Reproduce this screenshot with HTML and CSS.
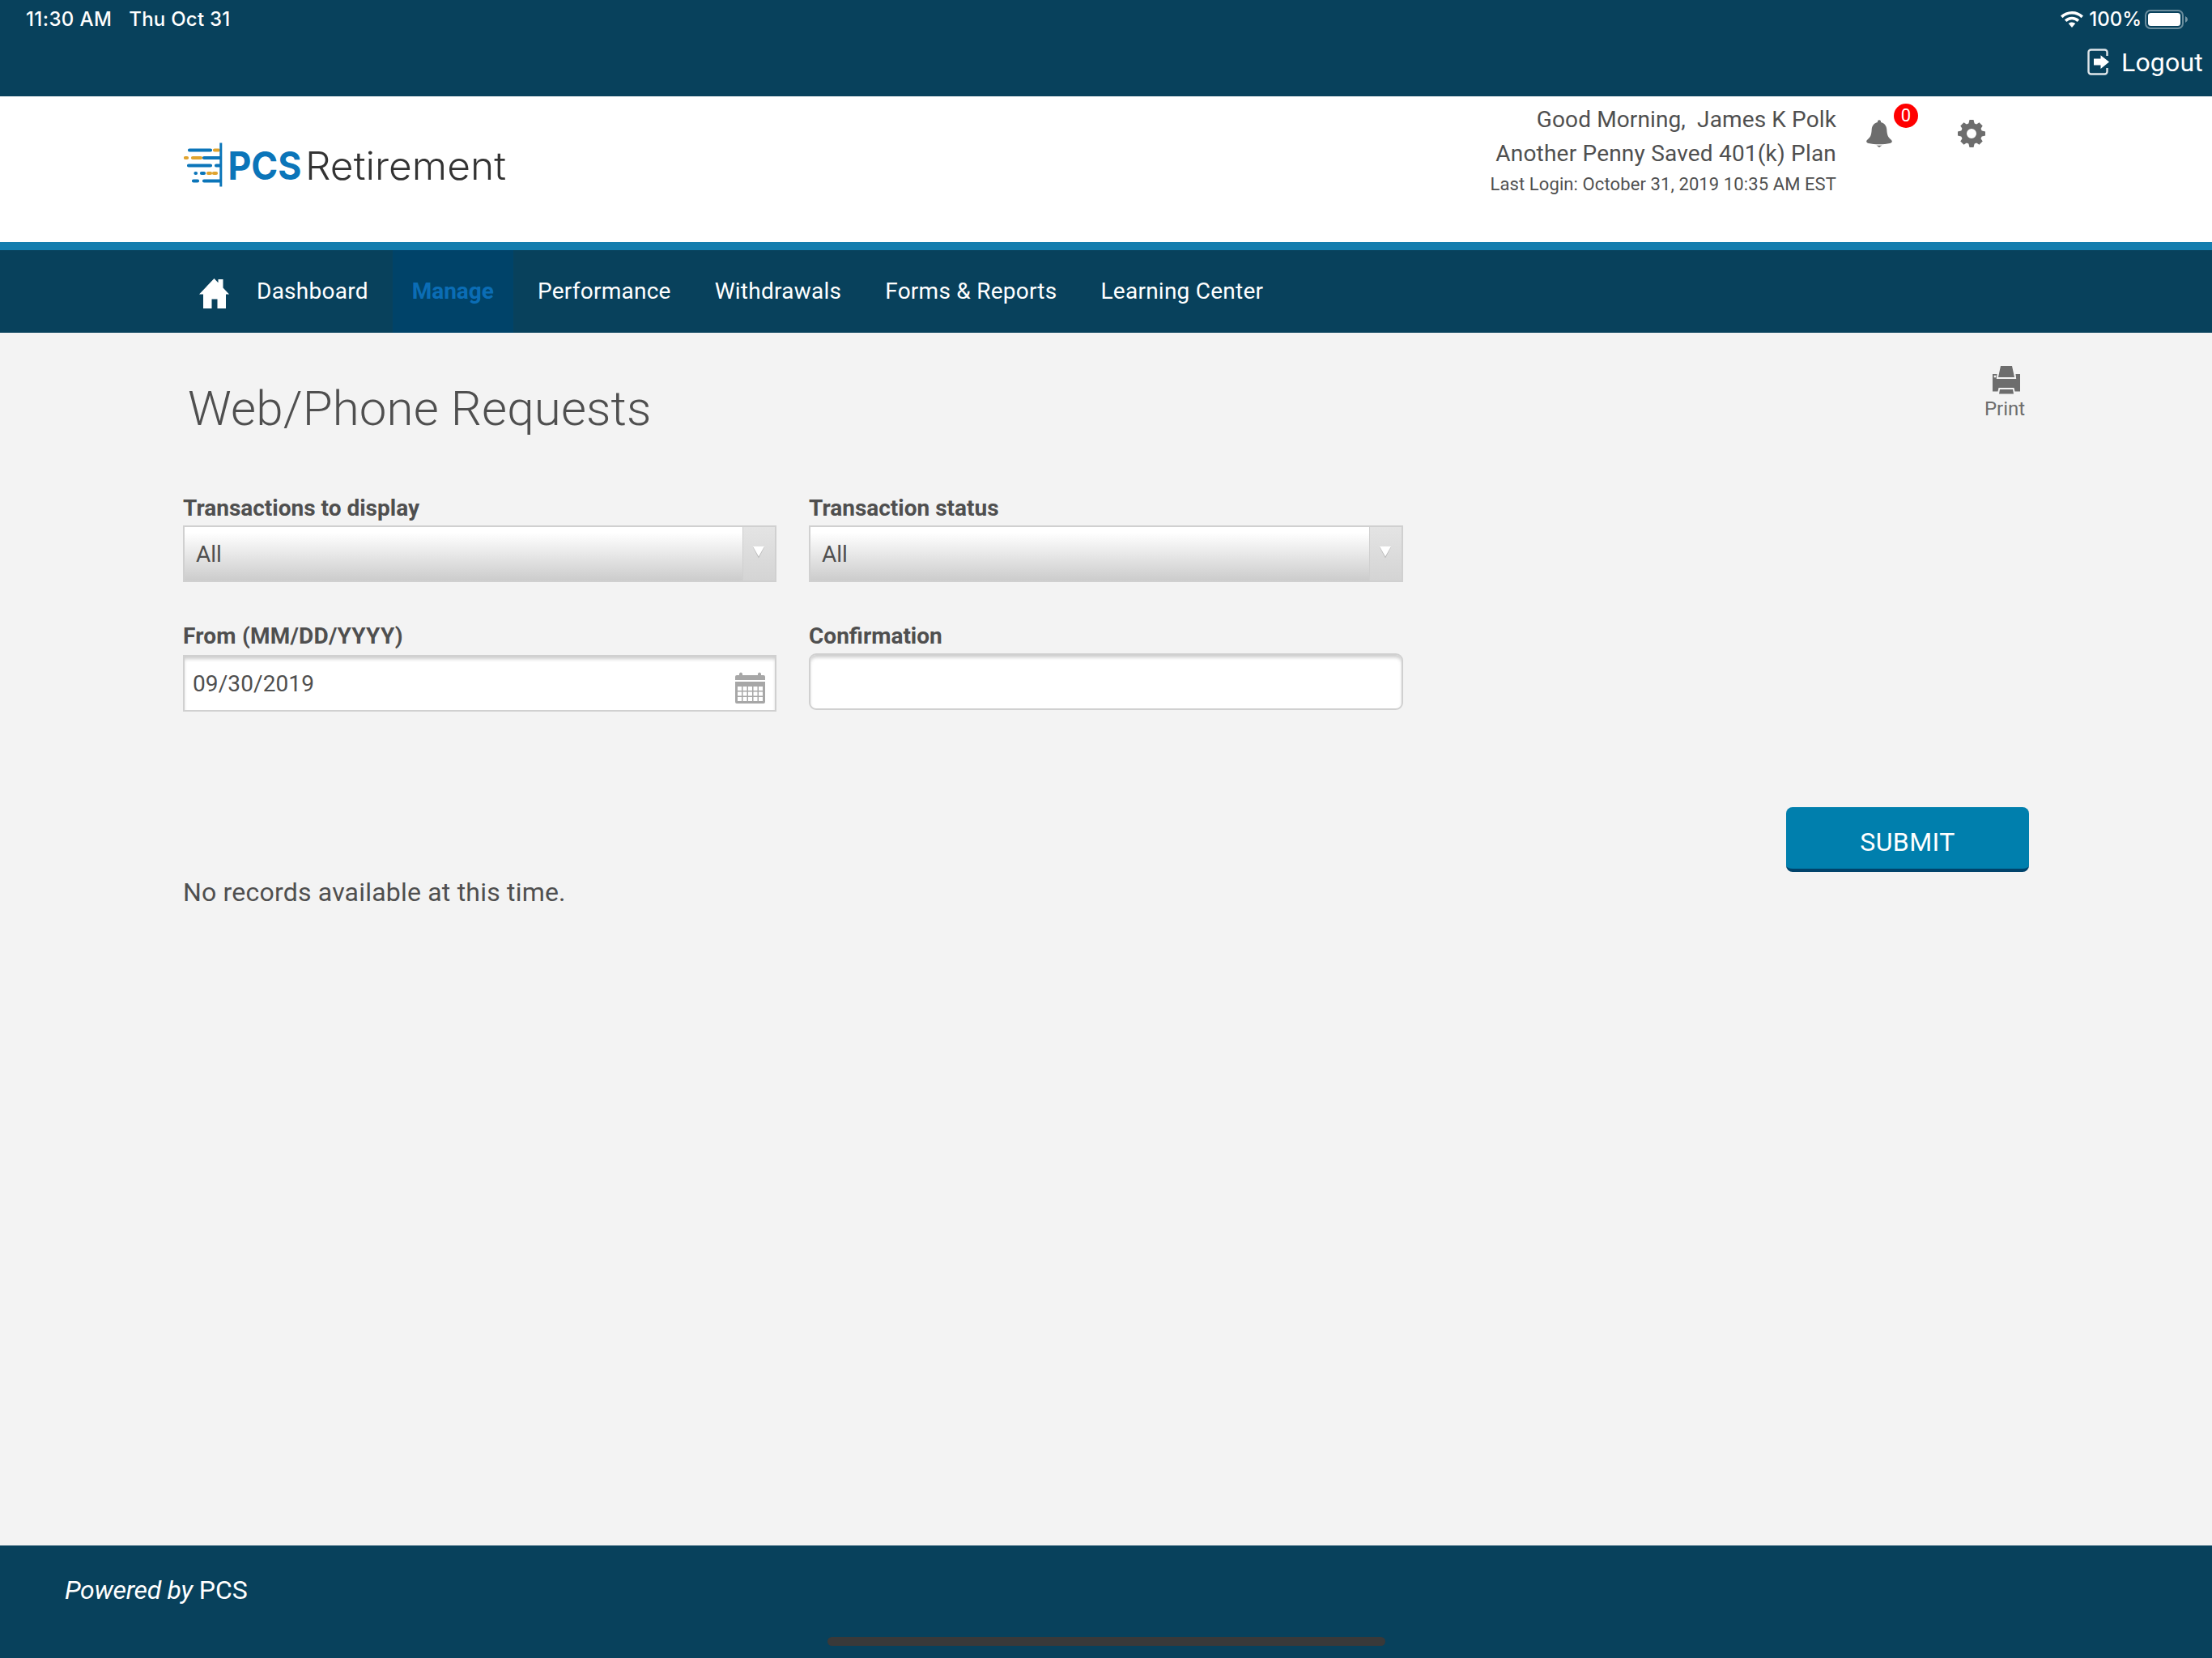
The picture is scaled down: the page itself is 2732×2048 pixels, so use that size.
FILE: index.html
```html
<!DOCTYPE html>
<html lang="en">
<head>
<meta charset="utf-8">
<title>Web/Phone Requests</title>
<link rel="stylesheet" href="styles.css">
</head>
<body>
<div class="topbar">
  <div class="status">
    <div class="status-left"><span class="time">11:30 AM</span><span class="date">Thu Oct 31</span></div>
    <div class="status-right">
      <svg class="wifi" viewBox="0 0 28 20"><path fill="#fff" d="M14 0C8.600 0 3.700 2.100 0 5.600L2.500 8.200A16.600 16.600 0 0 1 25.500 8.200L28 5.600A20 20 0 0 0 14 0zM14 6.800c-3.500 0-6.700 1.400-9.100 3.700l2.500 2.500a9.500 9.500 0 0 1 13.200 0l2.500-2.500A13 13 0 0 0 14 6.800zM14 13.400c-1.700 0-3.200.6-4.300 1.700L14 20l4.300-4.900A6 6 0 0 0 14 13.400z"/></svg>
      <span class="percent">100%</span>
      <svg class="battery" viewBox="0 0 54 24"><rect x="1" y="1" width="46" height="22" rx="6" fill="none" stroke="#fff" stroke-opacity=".4" stroke-width="2"/><rect x="4" y="4" width="40" height="16" rx="3.500" fill="#fff"/><path d="M50 8q3 1.500 3 4t-3 4z" fill="#fff" fill-opacity=".45"/></svg>
    </div>
  </div>
  <a class="logout"><svg viewBox="0 0 28 34"><path d="M24.500 9V4.500a3 3 0 0 0-3-3h-17a3 3 0 0 0-3 3v24a3 3 0 0 0 3 3h17a3 3 0 0 0 3-3V24" fill="none" stroke="#dfe6ea" stroke-width="2.400"/><path d="M8 12.500h8.500V8.200L27 16.600 16.500 25v-4.600H8z" fill="#fff"/></svg>Logout</a>
</div>
<header class="header">
  <svg class="logo" viewBox="0 0 400 60">
    <g stroke-width="4.200" stroke-linecap="round" fill="none">
      <path stroke="#0b75b9" d="M7 10.500h26M25 20h20M6 29.500h27M40 29.500h5M14.500 39h.5M22 39h3M12 48.500h5M25 48.500h20"/>
      <path stroke="#e0a32e" d="M38 10.500h5M2 20h2M11 20h10M30 39h3M37 39h3"/>
    </g>
    <path fill="#0b75b9" d="M44.300 1.500h3v54h-3z"/>
    <text class="logo-bold" x="54.500" y="46.700" textLength="91" lengthAdjust="spacingAndGlyphs">PCS</text>
    <text class="logo-light" x="150" y="46.700" textLength="248" lengthAdjust="spacingAndGlyphs">Retirement</text>
  </svg>
  <div class="account">
    <div class="account-line">Good Morning,&nbsp; James K Polk</div>
    <div class="account-line plan">Another Penny Saved 401(k) Plan</div>
    <div class="account-login">Last Login: October 31, 2019 10:35 AM EST</div>
  </div>
  <a class="bell"><svg viewBox="0 0 32 34"><path fill="#6d6d6d" d="M14 1.500q2-2.500 4 0V3c4.500 1 7 4.500 7.300 9 .4 7 1.700 9.500 4.700 12 3 2.500 2 4.200-1 5-7 1.800-19 1.800-26 0-3-.8-4-2.500-1-5 3-2.500 4.300-5 4.700-12C7 7.500 9.500 4 14 3zM12.500 31.500q3.500.5 7 0L16 34z"/></svg><span class="badge">0</span></a>
  <a class="gear"><svg viewBox="0 0 34 34"><g fill="#6d6d6d"><path fill-rule="evenodd" d="M17 4a13 13 0 1 0 0 26 13 13 0 0 0 0-26zm0 7a6 6 0 1 1 0 12 6 6 0 0 1 0-12z"/><path d="M14.500 0h5l1.500 6h-8zM14.500 34h5l1.500-6h-8zM0 14.500v5l6 1.500v-8zM34 14.500v5L28 21v-8z"/><path transform="rotate(45 17 17)" d="M14 .6h6l1.200 6h-8.400zM14 33.400h6l1.200-6h-8.400zM.6 14v6l6 1.200v-8.400zM33.400 14v6l-6 1.200v-8.400z"/></g></svg></a>
</header>
<nav class="nav">
  <a class="home"><svg viewBox="0 0 37 37"><path fill="#fff" d="M18.500 0l5 5.200V1h6v10.500l7.500 8h-4V37H22.500V25.500h-7V37H5V19.500H0z"/></svg></a>
  <a class="tab">Dashboard</a>
  <a class="tab tab-active">Manage</a>
  <a class="tab">Performance</a>
  <a class="tab">Withdrawals</a>
  <a class="tab">Forms &amp; Reports</a>
  <a class="tab">Learning Center</a>
</nav>
<main class="main">
  <div class="page-head">
    <h1 class="title">Web/Phone Requests</h1>
    <a class="print"><svg viewBox="0 0 34 35"><path fill="#6d6d6d" fill-rule="evenodd" d="M10 0h14l3 14H7zM0 10h5.500l-.7 6h24.400l-.7-6H34v21.500h-6.500L26.500 27h-19l-1 4.500H0zM1.700 11.700v2.600h2.600v-2.600zM9 29h16l1 5.500H8z"/></svg>Print</a>
  </div>
  <form class="filters">
    <div class="field"><label>Transactions to display</label><div class="select"><span>All</span><i class="arrow"><svg viewBox="0 0 16 16"><path d="M1 2h14L8 15.500z" fill="#b9b9b9"/><path d="M1 1h14L8 13.500z" fill="#fff"/></svg></i></div></div>
    <div class="field"><label>Transaction status</label><div class="select"><span>All</span><i class="arrow"><svg viewBox="0 0 16 16"><path d="M1 2h14L8 15.500z" fill="#b9b9b9"/><path d="M1 1h14L8 13.500z" fill="#fff"/></svg></i></div></div>
    <div class="field"><label class="label-date">From (MM/DD/YYYY)</label><div class="input input-date"><span>09/30/2019</span><svg viewBox="0 0 37 39"><path fill="#a7a7a7" fill-rule="evenodd" d="M2 4h3V2q2-3 4 0v2h19V2q2-3 4 0v2h3q2 0 2 2v4H0V6q0-2 2-2zM0 12h37v25q0 2-2 2H2q-2 0-2-2zM3 18v5h5v-5zm6.500 0v5h5v-5zm6.500 0v5h5v-5zm6.500 0v5h5v-5zm6.500 0v5h5v-5zM3 24.500v5h5v-5zm6.500 0v5h5v-5zm6.500 0v5h5v-5zm6.500 0v5h5v-5zm6.500 0v5h5v-5zM3 31v5h5v-5zm6.500 0v5h5v-5zm6.500 0v5h5v-5zm6.500 0v5h5v-5zm6.500 0v5h5v-5z"/></svg></div></div>
    <div class="field"><label>Confirmation</label><div class="input input-text"></div></div>
  </form>
  <div class="actions"><button class="submit" type="button">SUBMIT</button></div>
  <p class="empty">No records available at this time.</p>
</main>
<footer class="footer"><span><em>Powered by</em> PCS</span><div class="home-indicator"></div></footer>
</body>
</html>
```
FILE: styles.css
```css
* { box-sizing: border-box; }
body {
  margin: 0;
  height: 2048px;
  display: flex;
  flex-direction: column;
  background: #f3f3f3;
  color: #4f4f4f;
  font: 28px/38px Roboto, sans-serif;
}
svg { display: block; flex: none; }

.topbar { height: 119px; background: #08415c; color: #fff; }
.status {
  height: 48px;
  display: flex;
  justify-content: space-between;
  padding: 0 29px 0 32px;
  font: 450 24px/48px Inter, sans-serif;
}
.status-left, .status-right { display: flex; align-items: center; }
.time { letter-spacing: .4px; }
.date { margin-left: 21px; letter-spacing: .25px; }
.wifi { width: 28px; height: 20px; margin-right: 7px; }
.percent { margin-right: 4px; }
.battery { width: 54px; height: 24px; }
.logout {
  height: 58px;
  display: flex;
  justify-content: flex-end;
  align-items: center;
  padding-right: 11px;
  font-size: 32px;
  letter-spacing: .2px;
}
.logout svg { width: 28px; height: 34px; margin-right: 14px; }

.header { height: 180px; display: flex; background: #fff; padding-left: 227px; }
.logo { width: 400px; height: 60px; margin-top: 56px; }
.logo text { font-family: Inter, sans-serif; font-size: 48px; }
.logo-bold { font-weight: 700; fill: #0b75b9; }
.logo-light { font-weight: 350; fill: #333; }
.account { width: 1641px; padding-top: 8px; text-align: right; }
.account-line { height: 42px; line-height: 42px; letter-spacing: .12px; }
.plan { letter-spacing: .2px; }
.account-login { font-size: 22px; line-height: 34px; letter-spacing: .1px; }
.bell { position: relative; margin: 29px 0 0 37px; width: 32px; height: 34px; }
.bell svg { width: 32px; height: 34px; }
.badge {
  position: absolute;
  left: 34px;
  top: -20px;
  width: 30px;
  height: 30px;
  border-radius: 50%;
  background: #f00;
  color: #fff;
  font: 22px/29px Roboto, sans-serif;
  text-align: center;
}
.gear { margin: 29px 0 0 81px; }
.gear svg { width: 34px; height: 34px; }

.nav {
  height: 112px;
  display: flex;
  align-items: stretch;
  border-top: 10px solid #147dae;
  background: #08415c;
  color: #fff;
  padding-left: 246px;
}
.home { padding: 35px 7px 0 0; }
.home svg { width: 37px; height: 37px; }
.tab { padding: 0 27px; line-height: 101px; letter-spacing: .25px; }
.tab-active {
  margin: 0 3px;
  padding: 0 24px;
  background: #004369;
  color: #0b6db5;
  font-weight: 700;
  letter-spacing: 0;
}

.main { flex: 1; padding: 0 226px; }
.page-head { display: flex; justify-content: space-between; padding: 41px 5px 0 6px; height: 198px; }
.title { margin: 18px 0 0; font-weight: 300; font-size: 60px; line-height: 70px; letter-spacing: .15px; }
.print {
  display: flex;
  flex-direction: column;
  align-items: center;
  width: 50px;
  font-size: 24px;
  line-height: 36px;
  color: #6d6d6d;
}
.print svg { width: 34px; height: 35px; margin-left: 4px; }
.filters { display: grid; grid-template-columns: 733px 734px; column-gap: 40px; row-gap: 48px; }
.field label { display: block; font-weight: 700; margin-bottom: 2px; }
.field .label-date { letter-spacing: .22px; }
.select {
  height: 70px;
  display: flex;
  justify-content: space-between;
  border: 2px solid #d0d0d0;
  background: linear-gradient(#fff 10%, #ccc);
  line-height: 68px;
  padding-left: 14px;
}
.select span { height: 66px; }
.arrow {
  width: 40px;
  height: 66px;
  border-left: 1px solid #d0d0d0;
  background: linear-gradient(#e4e4e4, #d4d4d4);
  padding: 23px 0 0 11px;
}
.arrow svg { width: 16px; height: 16px; }
.input { height: 70px; border: 2px solid #d0d0d0; background: #fff; box-shadow: inset 0 4px 4px -1px #ccc; }
.input-date { display: flex; justify-content: space-between; margin-top: 4px; line-height: 68px; letter-spacing: .1px; padding: 0 12px 0 10px; }
.input-date svg { width: 37px; height: 39px; margin-top: 19px; }
.input-text { border-radius: 9px; }
.actions { display: flex; justify-content: flex-end; margin-top: 118px; }
.submit {
  width: 300px;
  height: 80px;
  border: 0;
  border-bottom: 4px solid #00436b;
  border-radius: 8px;
  background: #007fad;
  color: #fff;
  font: 32px/38px Roboto, sans-serif;
  letter-spacing: .4px;
  padding: 9px 0 0;
}
.empty { margin: 5px 0 0; font-size: 32px; line-height: 40px; letter-spacing: .2px; }

.footer {
  height: 139px;
  display: flex;
  flex-direction: column;
  background: #08415c;
  color: #fff;
  font-size: 32px;
  line-height: 40px;
  padding: 35px 0 0 80px;
}
.footer em { letter-spacing: -.3px; }
.home-indicator { width: 689px; height: 11px; margin: 38px 0 0 942px; border-radius: 6px; background: #393939; }
```
